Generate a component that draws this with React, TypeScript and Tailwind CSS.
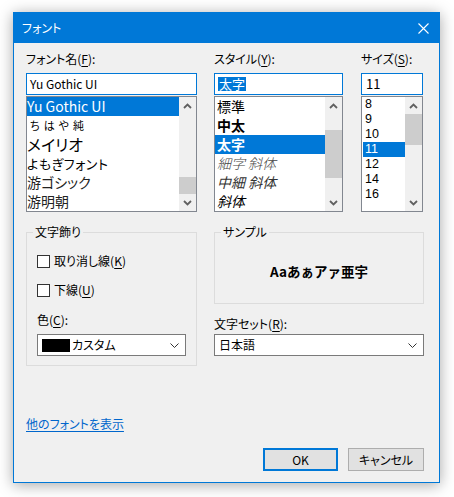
import type { ReactNode } from "react";

const font = "font-['Noto_Sans_CJK_JP','Noto_Sans',sans-serif] [font-feature-settings:'palt']";

function U({ children }: { children: ReactNode }) {
  return <span className="underline underline-offset-2">{children}</span>;
}

function Chevron({ up, className = "" }: { up?: boolean; className?: string }) {
  return (
    <svg width="9" height="6" viewBox="0 0 9 6" className={className}>
      <polyline
        points={up ? "1,5 4.5,1.5 8,5" : "1,1 4.5,4.5 8,1"}
        fill="none"
        stroke="#606060"
        strokeWidth="1.8"
      />
    </svg>
  );
}

function ScrollBar({ thumb }: { thumb: string }) {
  return (
    <div className="w-[17px] shrink-0 bg-[#f0f0f0] flex flex-col">
      <div className="h-[17px] flex items-center justify-center">
        <Chevron up />
      </div>
      <div className="flex-1">
        <div className={`bg-[#cdcdcd] ${thumb}`} />
      </div>
      <div className="h-[17px] flex items-center justify-center">
        <Chevron />
      </div>
    </div>
  );
}

function Combo({ children }: { children: ReactNode }) {
  return (
    <div className="h-[22px] border border-[#7a7a7a] bg-white flex items-center pl-[4px] pr-[6px]">
      <div className="flex-1 flex items-center text-[12px]">{children}</div>
      <svg width="9" height="5" viewBox="0 0 9 5">
        <polyline points="0.5,0.5 4.5,4.5 8.5,0.5" fill="none" stroke="#333" strokeWidth="1" />
      </svg>
    </div>
  );
}

function CheckRow({ children }: { children: ReactNode }) {
  return (
    <div className="h-[16px] flex items-center gap-[4px] text-[12px]">
      <div className="w-[13px] h-[13px] border border-[#333] bg-white" />
      <span>{children}</span>
    </div>
  );
}

export default function App() {
  const fonts = [
    { label: "Yu Gothic UI", cls: "text-[14px] text-white bg-[#0078d7]" },
    { label: "ちはや純", cls: "text-[11px] tracking-[4px] pl-[3px]" },
    { label: "メイリオ", cls: "text-[16px]" },
    { label: "よもぎフォント", cls: "text-[13px] tracking-[0.5px]" },
    { label: "游ゴシック", cls: "text-[14px] text-[#222]" },
    { label: "游明朝", cls: "text-[14px] text-[#222]" },
  ];
  const styles = [
    { label: "標準", cls: "" },
    { label: "中太", cls: "font-bold" },
    { label: "太字", cls: "font-bold text-white bg-[#0078d7]" },
    { label: "細字 斜体", cls: "italic font-light text-[#444]" },
    { label: "中細 斜体", cls: "italic text-[#333]" },
    { label: "斜体", cls: "italic" },
  ];
  const sizes = ["8", "9", "10", "11", "12", "14", "16"];

  return (
    <div className={`w-[454px] h-[497px] bg-white pt-[12px] pl-[13px] text-black ${font}`}>
      <div className="w-[427px] h-[471px] border border-[#0078d7] bg-[#f0f0f0] shadow-[0_2px_14px_rgba(0,0,0,0.35)] flex flex-col">
        {/* title bar */}
        <div className="h-[30px] bg-[#0078d7] flex items-center pl-[8px] pr-[10px] text-white text-[12px]">
          <span className="flex-1">フォント</span>
          <svg width="11" height="11" viewBox="0 0 11 11">
            <path d="M0.5 0.5L10.5 10.5M10.5 0.5L0.5 10.5" stroke="#fff" strokeWidth="1.1" />
          </svg>
        </div>

        <div className="flex-1 flex flex-col px-[12px] pt-[8px] pb-[11px]">
          {/* top lists */}
          <div className="flex gap-[17px]">
            <div className="w-[171px] flex flex-col">
              <div className="h-[16px] leading-[16px] text-[12px] mb-[6px]">
                フォント名(<U>F</U>):
              </div>
              <div className="h-[22px] border border-[#0078d7] bg-white flex items-center pl-[3px] text-[12px]">
                Yu Gothic UI
              </div>
              <div className="mt-[1px] h-[116px] border border-[#828790] bg-white flex">
                <div className="flex-1 flex flex-col">
                  {fonts.map((f) => (
                    <div key={f.label} className={`h-[19px] leading-[19px] flex items-center whitespace-nowrap ${f.cls}`}>
                      {f.label}
                    </div>
                  ))}
                </div>
                <ScrollBar thumb="mt-[63px] h-[17px]" />
              </div>
            </div>

            <div className="w-[129px] flex flex-col">
              <div className="h-[16px] leading-[16px] text-[12px] mb-[6px]">
                スタイル(<U>Y</U>):
              </div>
              <div className="h-[22px] border border-[#0078d7] bg-white flex items-center pl-[3px] text-[13px]">
                <span className="bg-[#0078d7] text-white leading-[14px] px-[1px]">太字</span>
              </div>
              <div className="mt-[1px] h-[116px] border border-[#828790] bg-white flex">
                <div className="flex-1 flex flex-col">
                  {styles.map((s) => (
                    <div key={s.label} className={`h-[19px] leading-[19px] flex items-center text-[14px] pl-[2px] whitespace-nowrap ${s.cls}`}>
                      {s.label}
                    </div>
                  ))}
                </div>
                <ScrollBar thumb="mt-[16px] h-[48px]" />
              </div>
            </div>

            <div className="ml-[1px] w-[62px] flex flex-col">
              <div className="h-[16px] leading-[16px] text-[12px] mb-[6px]">
                サイズ(<U>S</U>):
              </div>
              <div className="h-[22px] border border-[#0078d7] bg-white flex items-center pl-[4px] text-[13px]">
                11
              </div>
              <div className="mt-[1px] h-[116px] border border-[#828790] bg-white flex">
                <div className="flex-1 flex flex-col pl-[1px] font-['Liberation_Sans',sans-serif]">
                  {sizes.map((s) => (
                    <div
                      key={s}
                      className={`h-[15px] leading-[15px] flex items-center text-[12.5px] pl-[2px] ${
                        s === "11" ? "bg-[#0078d7] text-white" : ""
                      }`}
                    >
                      {s}
                    </div>
                  ))}
                </div>
                <ScrollBar thumb="h-[31px]" />
              </div>
            </div>
          </div>

          {/* groups */}
          <div className="mt-[20px] flex gap-[17px]">
            <div className="relative w-[171px] h-[134px] border border-[#dcdcdc] flex flex-col pl-[10px] pr-[10px] pt-[20px]">
              <span className="absolute -top-[9px] left-[6px] px-[2px] bg-[#f0f0f0] text-[12px] leading-[16px]">
                文字飾り
              </span>
              <CheckRow>
                取り消し線(<U>K</U>)
              </CheckRow>
              <div className="mt-[13px]">
                <CheckRow>
                  下線(<U>U</U>)
                </CheckRow>
              </div>
              <div className="mt-[14px] h-[16px] leading-[16px] text-[12px] mb-[6px]">
                色(<U>C</U>):
              </div>
              <Combo>
                <span className="w-[28px] h-[13px] bg-black mr-[2px]" />
                カスタム
              </Combo>
            </div>

            <div className="w-[210px] flex flex-col">
              <div className="relative h-[72px] border border-[#dcdcdc] flex items-center justify-center pt-[6px]">
                <span className="absolute -top-[9px] left-[6px] px-[2px] bg-[#f0f0f0] text-[12px] leading-[16px]">
                  サンプル
                </span>
                <span className="text-[13.5px] font-bold [font-feature-settings:normal]">Aaあぁアァ亜宇</span>
              </div>
              <div className="mt-[12px] h-[16px] leading-[16px] text-[12px] mb-[2px]">
                文字セット(<U>R</U>):
              </div>
              <Combo>日本語</Combo>
            </div>
          </div>

          <div className="mt-[50px] h-[16px] leading-[16px] text-[12px] text-[#0066cc] underline underline-offset-2">
            他のフォントを表示
          </div>

          <div className="mt-auto flex justify-end gap-[10px] pr-[3px]">
            <div className="w-[75px] h-[23px] border-2 border-[#0078d7] bg-[#e1e1e1] flex items-center justify-center text-[12px]">
              OK
            </div>
            <div className="w-[76px] h-[23px] border border-[#adadad] bg-[#e1e1e1] flex items-center justify-center text-[12px]">
              キャンセル
            </div>
          </div>
        </div>
      </div>
    </div>
  );
}
